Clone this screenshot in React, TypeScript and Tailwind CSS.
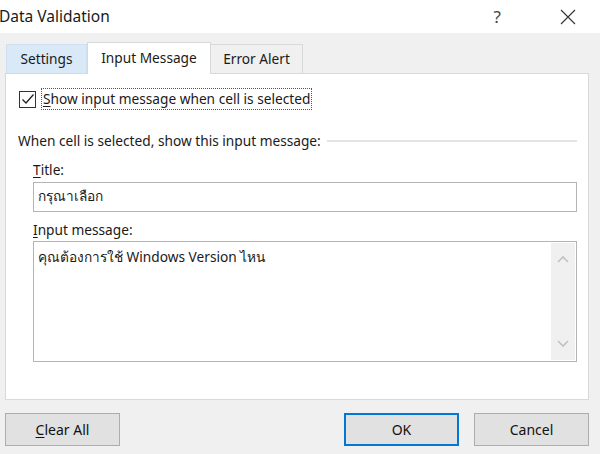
import React from "react";

const font = { fontFamily: '"Noto Sans", "Open Sans", sans-serif' };

const Check = () => (
  <svg width="14" height="14" viewBox="0 0 14 14" fill="none">
    <path d="M1.5 7.5 L5 11 L12.5 2.5" stroke="#222" strokeWidth="1.3" />
  </svg>
);

const Chevron = ({ up }: { up?: boolean }) => (
  <svg width="12" height="8" viewBox="0 0 12 8" fill="none">
    <path
      d={up ? "M1 7 L6 2 L11 7" : "M1 1 L6 6 L11 1"}
      stroke="#c2c2c2"
      strokeWidth="1.6"
    />
  </svg>
);

const Button: React.FC<{ children: React.ReactNode; primary?: boolean; className?: string }> = ({
  children,
  primary,
  className,
}) => (
  <button
    className={
      "h-[33px] w-[115px] bg-[#e1e1e1] text-[14px] text-[#111] flex items-center justify-center " +
      (primary ? "border-2 border-[#0078d7]" : "border border-[#adadad]") +
      " " +
      (className ?? "")
    }
  >
    {children}
  </button>
);

export default function App() {
  return (
    <div
      className="w-[600px] h-[454px] bg-[#f0f0f0] overflow-hidden text-[#1a1a1a] flex flex-col"
      style={font}
    >
      {/* title bar */}
      <div className="h-[33px] bg-white flex items-center shrink-0">
        <span className="text-[15.5px] -ml-[1px]">Data Validation</span>
        <span className="ml-auto text-[17px] text-[#444] mr-[59px]">?</span>
        <svg width="16" height="16" viewBox="0 0 16 16" className="mr-[24px]">
          <path d="M1 1 L15 15 M15 1 L1 15" stroke="#333" strokeWidth="1.1" />
        </svg>
      </div>

      {/* tabs */}
      <div className="flex items-end ml-[6px] mt-[9px] h-[31px] shrink-0 text-[13.7px]">
        <div className="h-[29px] w-[81px] bg-[#d9e9f8] border border-[#cfdff0] border-b-0 flex items-center justify-center">
          Settings
        </div>
        <div className="h-[32px] w-[124px] bg-white border border-[#d9d9d9] border-b-0 flex items-center justify-center relative z-10 -mb-[1px]">
          Input Message
        </div>
        <div className="h-[29px] w-[92px] bg-[#f0f0f0] border border-[#d9d9d9] border-b-0 border-l-0 flex items-center justify-center">
          Error Alert
        </div>
      </div>

      {/* panel */}
      <div className="ml-[5px] w-[584px] h-[327px] bg-white border border-[#d9d9d9] shrink-0 flex flex-col text-[13.7px]">
        <div className="flex items-center mt-[14px] ml-[13px]">
          <div className="w-[17px] h-[17px] border border-[#333] flex items-center justify-center bg-white">
            <Check />
          </div>
          <div className="ml-[5px] h-[22px] px-[1px] border border-dotted border-[#555] flex items-center">
            <span>
              <span className="underline underline-offset-2">S</span>how input message when cell is selected
            </span>
          </div>
        </div>

        <div className="flex items-center mt-[21px] ml-[12px] mr-[11px]">
          <span className="whitespace-nowrap">When cell is selected, show this input message:</span>
          <div className="flex-1 h-[2px] bg-[#e3e3e3] ml-[6px]" />
        </div>

        <div className="ml-[27px] mr-[11px] flex flex-col">
          <span className="mt-[8px] leading-[20px]">
            <span className="underline underline-offset-2">T</span>itle:
          </span>
          <div className="mt-[2px] h-[30px] border border-[#b4b4b4] flex items-center px-[4px]">
            กรุณาเลือก
          </div>
          <span className="mt-[8px] leading-[20px]">
            <span className="underline underline-offset-2">I</span>nput message:
          </span>
          <div className="mt-[1px] h-[121px] border border-[#b4b4b4] flex p-[1px]">
            <div className="flex-1 px-[3px] pt-[4px]">คุณต้องการใช้ Windows Version ไหน</div>
            <div className="w-[24px] bg-[#f0f0f0] flex flex-col items-center justify-between py-[12px]">
              <Chevron up />
              <Chevron />
            </div>
          </div>
        </div>
      </div>

      {/* buttons */}
      <div className="flex mt-[13px] pl-[5px] pr-[11px]">
        <Button>
          <span>
            <span className="underline underline-offset-2">C</span>lear All
          </span>
        </Button>
        <Button primary className="ml-auto">OK</Button>
        <Button className="ml-[15px]">Cancel</Button>
      </div>
    </div>
  );
}
